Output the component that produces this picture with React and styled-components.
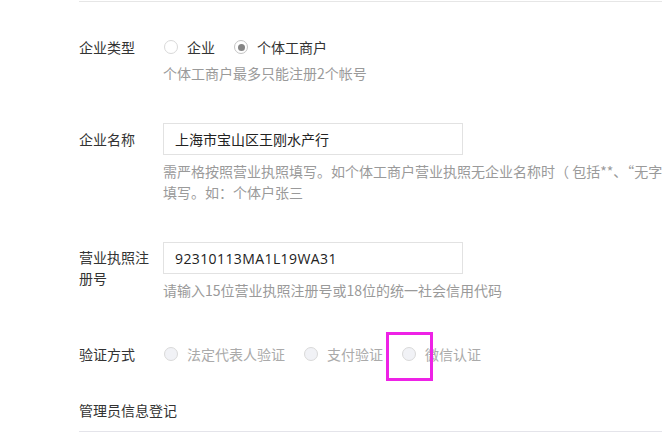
import React from 'react'
import styled, { createGlobalStyle } from 'styled-components'

const GlobalStyle = createGlobalStyle`
  body {
    margin: 0;
    background: #fff;
    font-family: "Microsoft YaHei", "Noto Sans CJK SC", "Noto Sans", sans-serif;
    font-size: 14px;
    color: #333;
  }
`

const App = () => (
  <Page>
    <GlobalStyle />
    <Rule />
    <Row gap={35}>
      <Label>企业类型</Label>
      <Field>
        <RadioGroup>
          <Option>
            <Radio />
            企业
          </Option>
          <Option>
            <Radio checked />
            个体工商户
          </Option>
        </RadioGroup>
        <Hint>个体工商户最多只能注册2个帐号</Hint>
      </Field>
    </Row>

    <Row gap={40}>
      <Label tall>企业名称</Label>
      <Field>
        <Input defaultValue="上海市宝山区王刚水产行" />
        <Hint wide>
          需严格按照营业执照填写。如个体工商户营业执照无企业名称时（ 包括**、“无字号”、“空白”等），请按照“个体户+经营者姓名”
          <br />
          填写。如：个体户张三
        </Hint>
      </Field>
    </Row>

    <Row gap={39}>
      <Label wrap>营业执照注册号</Label>
      <Field>
        <Input latin defaultValue="92310113MA1L19WA31" />
        <Hint>请输入15位营业执照注册号或18位的统一社会信用代码</Hint>
      </Field>
    </Row>

    <Row gap={44}>
      <Label>验证方式</Label>
      <Field>
        <RadioGroup>
          <Option disabled>
            <Radio disabled />
            法定代表人验证
          </Option>
          <Option disabled>
            <Radio disabled />
            支付验证
          </Option>
          <Option disabled>
            <Radio disabled />
            微信认证
            <Highlight />
          </Option>
        </RadioGroup>
      </Field>
    </Row>

    <Title>管理员信息登记</Title>
    <Rule bottom />
  </Page>
)

export default App

const Page = styled.div`
  padding: 1px 0 0 79px;
  width: 662px;
  height: 440px;
  box-sizing: border-box;
  overflow: hidden;
`

const Rule = styled.div`
  border-top: 1px solid ${p => (p.bottom ? '#e4e4ea' : '#e6e6e6')};
  margin-top: ${p => (p.bottom ? '11px' : '0')};
`

const Row = styled.div`
  display: flex;
  margin-top: ${p => p.gap}px;
`

const Label = styled.div`
  width: 84px;
  flex-shrink: 0;
  box-sizing: border-box;
  padding-right: 12px;
  color: #333;
  line-height: ${p => (p.tall ? '32px' : p.wrap ? '21px' : '20px')};
  padding-top: ${p => (p.wrap ? '5px' : '0')};
`

const Field = styled.div`
  flex: 1;
  min-width: 0;
`

const RadioGroup = styled.div`
  display: flex;
  align-items: center;
  gap: 18px;
  line-height: 20px;
`

const Option = styled.label`
  position: relative;
  display: flex;
  align-items: center;
  color: ${p => (p.disabled ? '#aaa' : '#333')};
  white-space: nowrap;
`

const Radio = styled.span`
  width: 14px;
  height: 14px;
  box-sizing: border-box;
  border-radius: 50%;
  border: 1px solid ${p => (p.checked ? '#c4c4c4' : '#d9d9d9')};
  background: ${p => (p.disabled ? '#f1f2f6' : '#fff')};
  margin: 0 9px 0 1px;
  display: flex;
  align-items: center;
  justify-content: center;
  &::after {
    content: '';
    display: ${p => (p.checked ? 'block' : 'none')};
    width: 7px;
    height: 7px;
    border-radius: 50%;
    background: #858585;
  }
`

const Input = styled.input`
  display: block;
  width: 300px;
  height: 32px;
  box-sizing: border-box;
  border: 1px solid #e2e2e2;
  padding: 0 11px;
  font: inherit;
  font-family: ${p =>
    p.latin ? '"Open Sans", "Noto Sans CJK SC", sans-serif' : 'inherit'};
  letter-spacing: ${p => (p.latin ? '0.4px' : '0')};
  font-size: 14px;
  color: #222;
  outline: none;
`

const Hint = styled.div`
  color: #9a9a9a;
  line-height: ${p => (p.wide ? '21px' : '20px')};
  margin-top: 6px;
  white-space: nowrap;
`

const Highlight = styled.span`
  position: absolute;
  left: -15px;
  top: -12px;
  width: 47px;
  height: 49px;
  box-sizing: border-box;
  border: 3px solid #ee22e6;
  pointer-events: none;
`

const Title = styled.div`
  margin-top: 36px;
  line-height: 20px;
  color: #333;
`
